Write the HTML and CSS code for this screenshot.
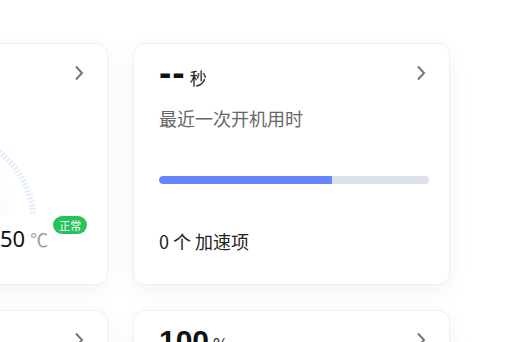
FILE: index.html
```html
<!DOCTYPE html>
<html lang="zh-CN">
<head>
  <meta charset="UTF-8">
  <meta name="viewport" content="width=device-width, initial-scale=1.0">
  <title>性能概览</title>
  <link rel="stylesheet" href="styles.css">
</head>

<body>

  <!-- Overview cards -->
  <div class="card-grid">

    <!-- CPU temperature -->
    <div class="card">
      <div class="card-head">
        <span class="value"></span>
        <svg class="chevron" width="10" height="16" viewBox="0 0 10 16"><path d="M2 1.5l6 6.5-6 6.5" fill="none" stroke="currentColor" stroke-width="2"/></svg>
      </div>
      <svg class="gauge" width="269" height="126" viewBox="0 0 269 126">
        <defs>
          <radialGradient id="glow" cx="0.5" cy="0.5" r="0.5">
            <stop offset="0.6" stop-color="#f4f7fc" stop-opacity="0.9"/>
            <stop offset="1" stop-color="#f4f7fc" stop-opacity="0"/>
          </radialGradient>
        </defs>
        <circle cx="123" cy="135" r="80" fill="url(#glow)"/>
        <path d="M29.7 123.5A94 94 0 0 1 216.3 123.5" fill="none" stroke="#e2edfc" stroke-width="6" stroke-dasharray="2 1.7"/>
      </svg>
      <div class="temp-row">
        <span class="temp-num">50</span>
        <span class="temp-unit">℃</span>
        <span class="badge">正常</span>
      </div>
    </div>

    <!-- Boot time -->
    <div class="card">
      <div class="card-head">
        <span class="value"><span class="dash">--</span><small>秒</small></span>
        <svg class="chevron" width="10" height="16" viewBox="0 0 10 16"><path d="M2 1.5l6 6.5-6 6.5" fill="none" stroke="currentColor" stroke-width="2"/></svg>
      </div>
      <p class="label">最近一次开机用时</p>
      <div class="bar"><div class="bar-fill" style="width: 64%"></div></div>
      <p class="foot">0 个 加速项</p>
    </div>

    <!-- Second row -->
    <div class="card">
      <div class="card-head">
        <span class="value"></span>
        <svg class="chevron" width="10" height="16" viewBox="0 0 10 16"><path d="M2 1.5l6 6.5-6 6.5" fill="none" stroke="currentColor" stroke-width="2"/></svg>
      </div>
    </div>

    <div class="card">
      <div class="card-head">
        <span class="value">100<small>%</small></span>
        <svg class="chevron" width="10" height="16" viewBox="0 0 10 16"><path d="M2 1.5l6 6.5-6 6.5" fill="none" stroke="currentColor" stroke-width="2"/></svg>
      </div>
    </div>

  </div>

</body>
</html>
```

FILE: styles.css
```css
/* General styles */
body {
  margin: 0;
  background-color: #fff;
  color: #222;
  font-family: "Noto Sans CJK SC", "Noto Sans", sans-serif;
  overflow: hidden;
}

.card-grid {
  display: grid;
  grid-template-columns: 317px 317px;
  grid-auto-rows: 242px;
  gap: 25px;
  margin-left: -209px;
  padding-top: 43px;
}

/* Cards */
.card {
  box-sizing: border-box;
  background-color: #fff;
  border: 1px solid #eef0f3;
  border-radius: 12px;
  box-shadow: 0 6px 22px rgba(0, 0, 0, 0.05);
  padding: 16px 20px 0 25px;
}

.card-head {
  display: flex;
  justify-content: space-between;
  align-items: center;
  height: 30px;
}

.value {
  font-family: "Liberation Sans", Arial, sans-serif;
  font-size: 30px;
  font-weight: bold;
  line-height: 30px;
  color: #111;
}

.value .dash {
  font-size: 37px;
  letter-spacing: 1px;
}

.value small {
  font-family: "Noto Sans CJK SC", sans-serif;
  font-size: 17px;
  font-weight: normal;
  margin-left: 4px;
  color: #222;
}

.chevron {
  color: #777;
  margin: -5px 3px 0 0;
}

.label {
  margin: 15px 0 0;
  font-size: 18px;
  line-height: 26px;
  color: #666;
}

/* Progress bar */
.bar {
  height: 8px;
  margin-top: 45px;
  border-radius: 4px;
  background-color: #dde1ec;
  overflow: hidden;
}

.bar-fill {
  height: 100%;
  border-radius: 4px 0 0 4px;
  background-color: #6586fe;
}

.foot {
  margin: 44px 0 0;
  font-size: 18px;
  line-height: 26px;
  color: #222;
}

/* Temperature gauge */
.gauge {
  display: block;
}

.temp-row {
  display: flex;
  align-items: baseline;
  padding: 8px 0 0 183px;
}

.temp-num {
  font-family: "Noto Sans", sans-serif;
  font-size: 22px;
  line-height: 28px;
  color: #111;
}

.temp-unit {
  font-size: 18px;
  color: #999;
  margin-left: 5px;
}

.badge {
  position: relative;
  top: -17px;
  margin-left: 5px;
  padding: 0 6px;
  border-radius: 9px;
  background-color: #26c25b;
  color: #fff;
  font-size: 11px;
  line-height: 18px;
  white-space: nowrap;
}
```
